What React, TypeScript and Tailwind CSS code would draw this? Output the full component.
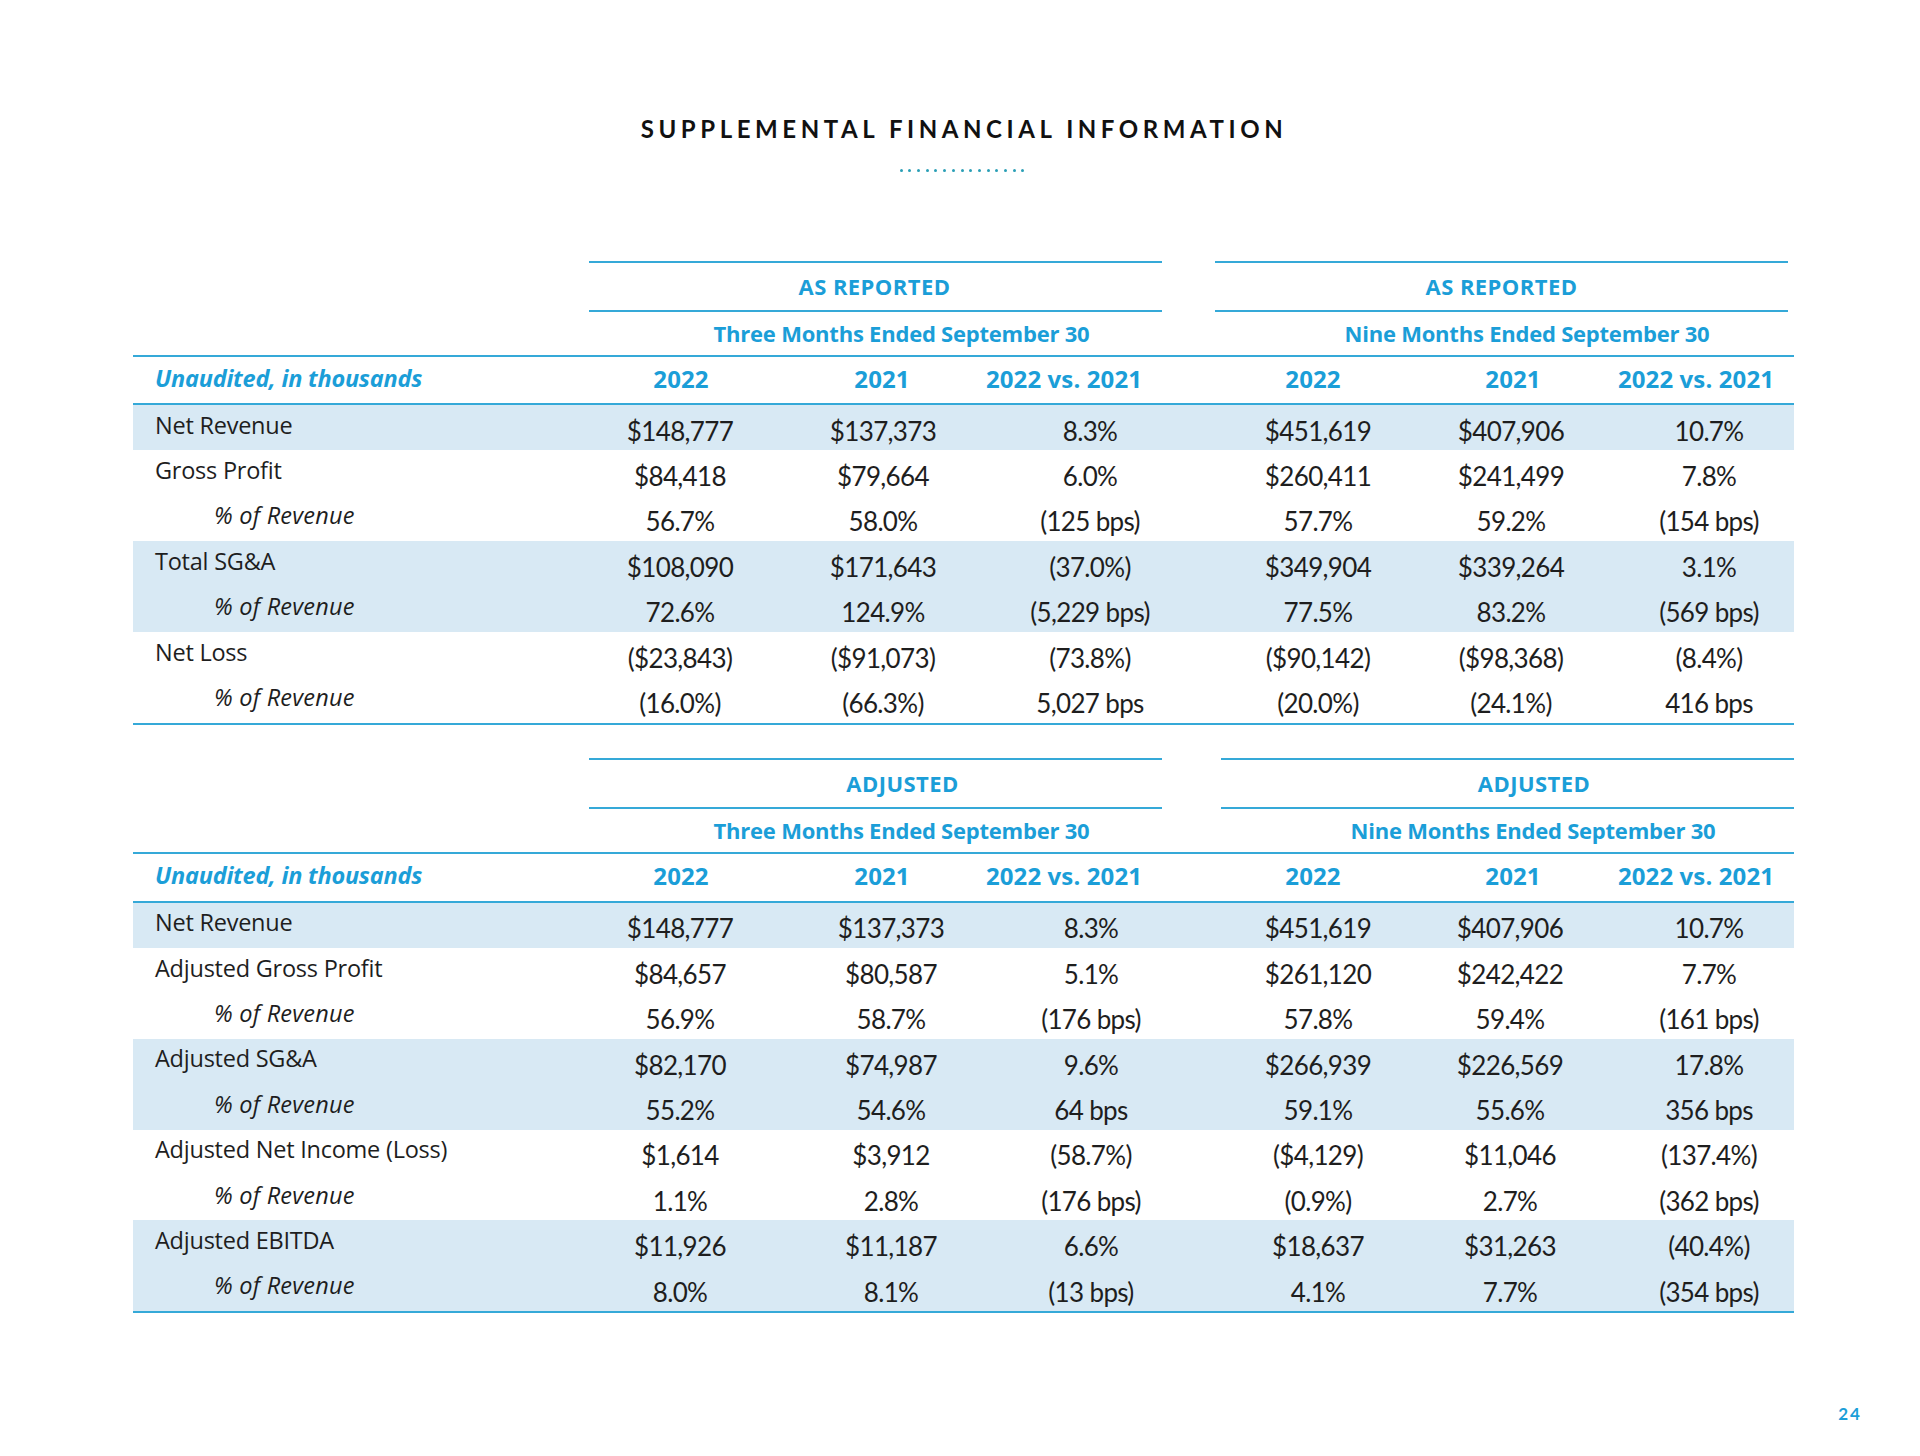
import React from "react";

const BLUE = "text-[#1b9ed8]";
const OPEN = "font-['Open_Sans',_'Lato',_sans-serif]";

type RowData = { label: string; indent?: boolean; band?: boolean; values: string[] };

const table1: RowData[] = [
  { label: "Net Revenue", band: true, values: ["$148,777", "$137,373", "8.3%", "$451,619", "$407,906", "10.7%"] },
  { label: "Gross Profit", values: ["$84,418", "$79,664", "6.0%", "$260,411", "$241,499", "7.8%"] },
  { label: "% of Revenue", indent: true, values: ["56.7%", "58.0%", "(125 bps)", "57.7%", "59.2%", "(154 bps)"] },
  { label: "Total SG&A", band: true, values: ["$108,090", "$171,643", "(37.0%)", "$349,904", "$339,264", "3.1%"] },
  { label: "% of Revenue", indent: true, band: true, values: ["72.6%", "124.9%", "(5,229 bps)", "77.5%", "83.2%", "(569 bps)"] },
  { label: "Net Loss", values: ["($23,843)", "($91,073)", "(73.8%)", "($90,142)", "($98,368)", "(8.4%)"] },
  { label: "% of Revenue", indent: true, values: ["(16.0%)", "(66.3%)", "5,027 bps", "(20.0%)", "(24.1%)", "416 bps"] },
];

const table2: RowData[] = [
  { label: "Net Revenue", band: true, values: ["$148,777", "$137,373", "8.3%", "$451,619", "$407,906", "10.7%"] },
  { label: "Adjusted Gross Profit", values: ["$84,657", "$80,587", "5.1%", "$261,120", "$242,422", "7.7%"] },
  { label: "% of Revenue", indent: true, values: ["56.9%", "58.7%", "(176 bps)", "57.8%", "59.4%", "(161 bps)"] },
  { label: "Adjusted SG&A", band: true, values: ["$82,170", "$74,987", "9.6%", "$266,939", "$226,569", "17.8%"] },
  { label: "% of Revenue", indent: true, band: true, values: ["55.2%", "54.6%", "64 bps", "59.1%", "55.6%", "356 bps"] },
  { label: "Adjusted Net Income (Loss)", values: ["$1,614", "$3,912", "(58.7%)", "($4,129)", "$11,046", "(137.4%)"] },
  { label: "% of Revenue", indent: true, values: ["1.1%", "2.8%", "(176 bps)", "(0.9%)", "2.7%", "(362 bps)"] },
  { label: "Adjusted EBITDA", band: true, values: ["$11,926", "$11,187", "6.6%", "$18,637", "$31,263", "(40.4%)"] },
  { label: "% of Revenue", indent: true, band: true, values: ["8.0%", "8.1%", "(13 bps)", "4.1%", "7.7%", "(354 bps)"] },
];

const colW = ["w-[184px]", "w-[218px]", "w-[146px]", "w-[196px]", "w-[204px]", "w-[162px]"];

const valPad1 = ["pr-[2px]", "pl-[2px]", "pl-[52px]", "pl-[10px]", "pr-[4px]", "pl-[26px]"];
const valPad2 = ["pr-[2px]", "pl-[18px]", "pl-[54px]", "pl-[10px]", "pr-[6px]", "pl-[26px]"];

function Cells({ items, pads, cls }: { items: React.ReactNode[]; pads: string[]; cls: string }) {
  return (
    <>
      {items.slice(0, 3).map((v, i) => (
        <div key={i} className={`${colW[i]} shrink-0 min-w-0 flex justify-center whitespace-nowrap ${pads[i]} ${cls}`}>
          {v}
        </div>
      ))}
      <div className="w-[78px] shrink-0" />
      {items.slice(3, 6).map((v, i) => (
        <div key={i + 3} className={`${colW[i + 3]} shrink-0 min-w-0 flex justify-center whitespace-nowrap ${pads[i + 3]} ${cls}`}>
          {v}
        </div>
      ))}
      <div className="w-[17px] shrink-0" />
    </>
  );
}

function Group({ title, titlePad, sub, subPad, extra }: { title: string; titlePad: string; sub: string; subPad: string; extra: string }) {
  return (
    <div className={`w-[573px] shrink-0 ${extra}`}>
      <div
        className={`border-t-2 border-[#35a9d8] h-[49px] flex items-center justify-center ${titlePad} ${OPEN} text-[22px] font-bold ${BLUE} tracking-[0.02em]`}
      >
        {title}
      </div>
      <div
        className={`border-t-2 border-[#35a9d8] h-[45px] flex items-center justify-center ${subPad} ${OPEN} text-[22px] font-bold ${BLUE} whitespace-nowrap tracking-[-0.01em]`}
      >
        {sub}
      </div>
    </div>
  );
}

function Table({
  rows,
  pads,
  title,
  titlePadL,
  rightTitlePad,
  gap,
  headerH,
}: {
  rows: RowData[];
  pads: string[];
  title: string;
  titlePadL: string;
  rightTitlePad: string;
  gap: string;
  headerH: string;
}) {
  return (
    <div className="ml-[133px] w-[1661px]">
      <div className="flex pl-[456px]">
        <Group title={title} titlePad={titlePadL} sub="Three Months Ended September 30" subPad="pl-[52px]" extra="" />
        <Group title={title} titlePad={rightTitlePad} sub="Nine Months Ended September 30" subPad="pl-[51px]" extra={gap} />
      </div>
      <div className={`border-t-2 border-[#35a9d8] ${headerH} flex items-center pb-[3px]`}>
        <div className={`w-[456px] shrink-0 pl-[22px] ${OPEN} text-[23.5px] font-bold italic ${BLUE} whitespace-nowrap tracking-[-0.01em]`}>
          Unaudited, in thousands
        </div>
        <Cells
          items={["2022", "2021", "2022 vs. 2021", "2022", "2021", "2022 vs. 2021"]}
          pads={["", "", "", "", "", ""]}
          cls={`${OPEN} text-[24px] font-bold ${BLUE} tracking-[0.005em]`}
        />
      </div>
      <div className="border-t-2 border-b-2 border-[#35a9d8]">
        {rows.map((r, i) => (
          <div key={i} className={`h-[45.4px] flex items-center ${r.band ? "bg-[#d8e9f4]" : "bg-white"}`}>
            <div
              className={`w-[456px] shrink-0 pb-[5px] ${OPEN} text-[#1e1e1e] whitespace-nowrap ${
                r.indent ? "pl-[81px] italic text-[23.5px] tracking-[0.01em]" : "pl-[22px] text-[23.5px] tracking-[-0.01em]"
              }`}
            >
              {r.label}
            </div>
            <Cells items={r.values} pads={pads} cls="pt-[7px] text-[26px] text-[#1e1e1e] tracking-[-0.025em]" />
          </div>
        ))}
      </div>
    </div>
  );
}

export default function App() {
  return (
    <div className="w-[1920px] h-[1456px] bg-white flex flex-col font-['Lato',_'Open_Sans',_sans-serif]">
      <div className="mt-[117px] h-[24px] leading-[24px] text-center text-[24px] font-bold tracking-[0.19em] text-[#111111] pl-[8px]">
        SUPPLEMENTAL FINANCIAL INFORMATION
      </div>
      <div className="mt-[28px] flex justify-center gap-[5.7px] pl-[4px]">
        {Array.from({ length: 15 }).map((_, i) => (
          <div key={i} className="w-[3px] h-[3px] rounded-full bg-[#2a9fb6]" />
        ))}
      </div>
      <div className="mt-[89px]">
        <Table
          rows={table1}
          pads={valPad1}
          title="AS REPORTED"
          titlePadL="pr-[2px]"
          rightTitlePad=""
          gap="ml-[53px]"
          headerH="h-[48px]"
        />
      </div>
      <div className="mt-[33px]">
        <Table
          rows={table2}
          pads={valPad2}
          title="ADJUSTED"
          titlePadL="pl-[54px]"
          rightTitlePad="pl-[53px]"
          gap="ml-[59px]"
          headerH="h-[49px]"
        />
      </div>
      <div className="mt-[92px] flex justify-end pr-[58px]">
        <div className={`text-[17px] leading-[17px] font-bold tracking-[0.12em] ${BLUE}`}>24</div>
      </div>
    </div>
  );
}
